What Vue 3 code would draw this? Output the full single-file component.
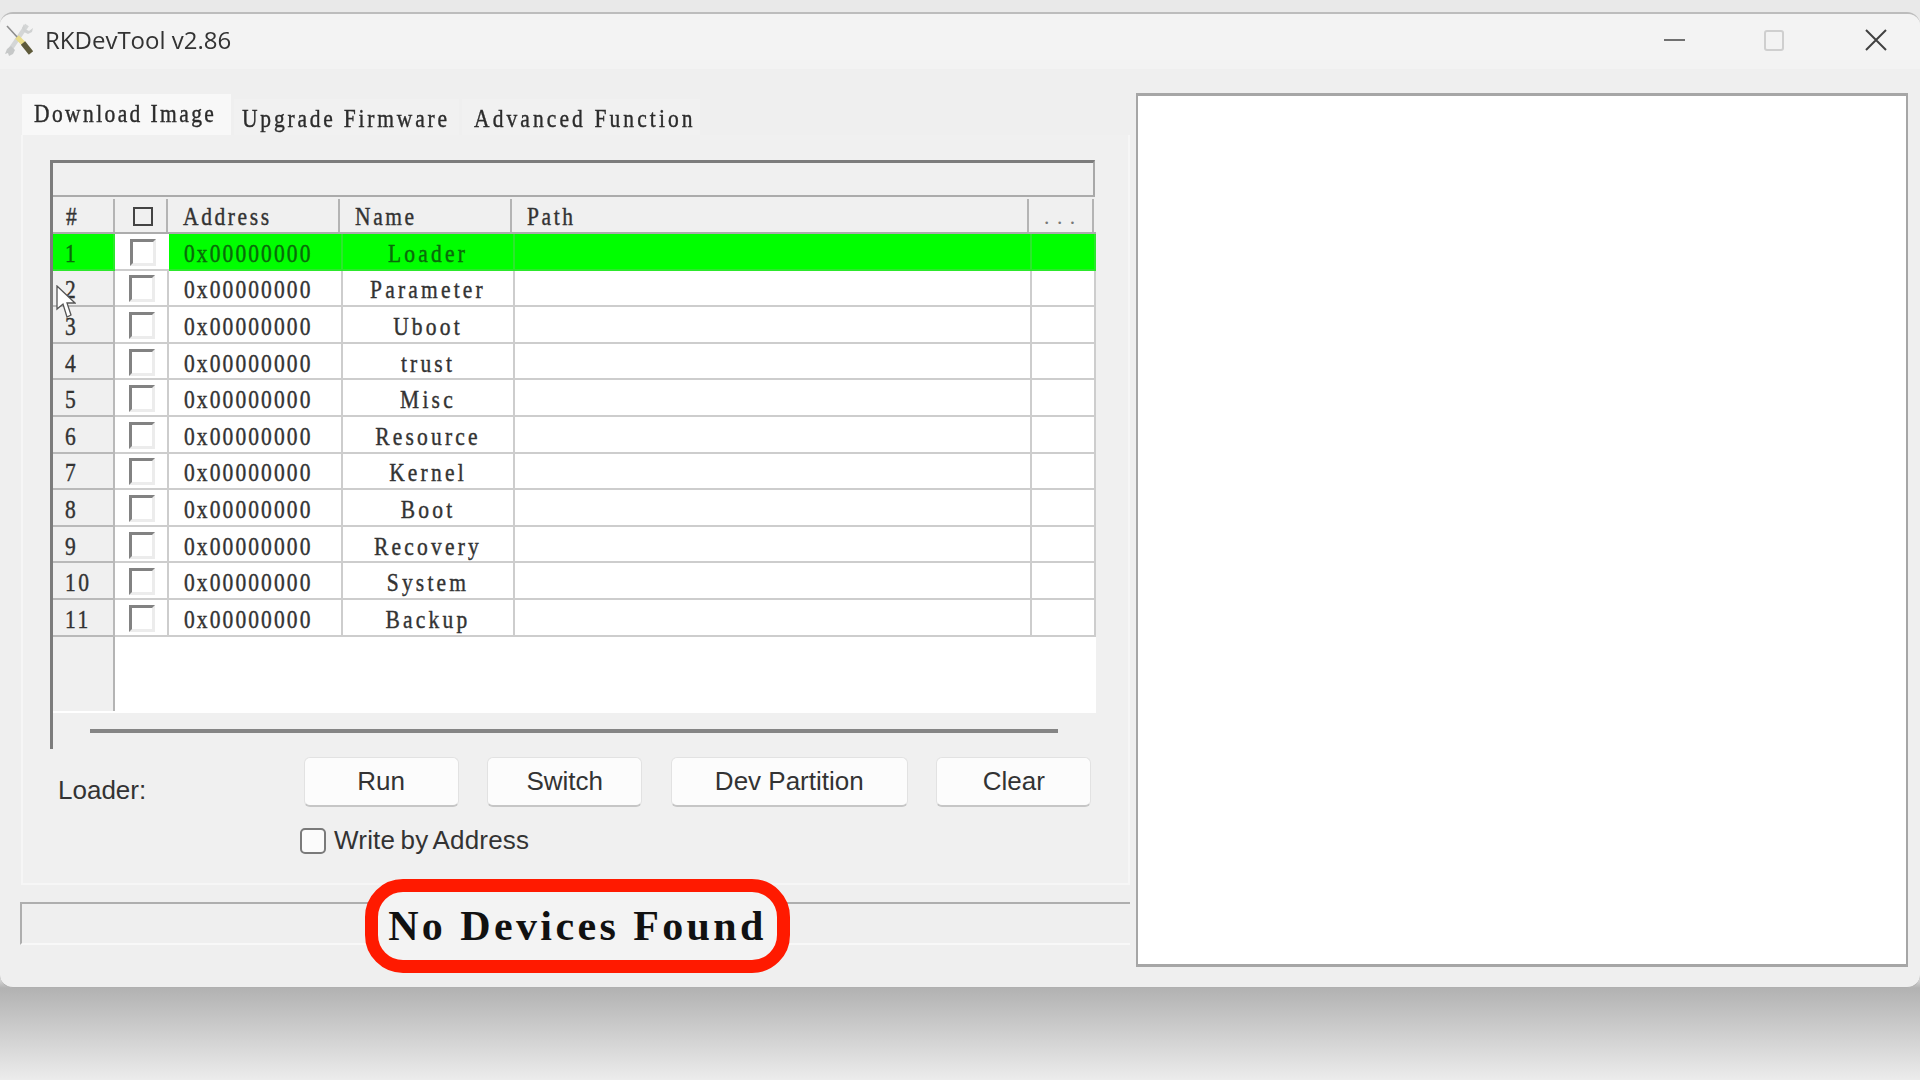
<script setup>
const names = ['Loader', 'Parameter', 'Uboot', 'trust', 'Misc', 'Resource', 'Kernel', 'Boot', 'Recovery', 'System', 'Backup']
const rows = names.map((name, i) => ({ no: i + 1, name, addr: '0x00000000' }))
const tabs = ['Download Image', 'Upgrade Firmware', 'Advanced Function']
const buttons = ['Run', 'Switch', 'Dev Partition', 'Clear']
</script>

<template>
  <div class="page">
    <div class="window">
      <div class="titlebar">
        <svg class="app-icon" viewBox="0 0 30 34" width="30" height="34">
          <path d="M23 3 L6 28" stroke="#d4d6d6" stroke-width="4.5" fill="none" />
          <path d="M20 2 L21 7 L25 9 L29 6 L28 10 L24 12 L20 10 L18 6 Z" fill="#d0d2d2" />
          <path d="M7 24 L3 27 L1 32 L4 31 L5 34 L9 32 L11 28 Z" fill="#c6c8c8" />
          <path d="M3 4 L14 16" stroke="#8d8d8d" stroke-width="1.6" fill="none" />
          <path d="M13 15 L20 22" stroke="#e9dc8a" stroke-width="5" fill="none" />
          <path d="M19 21 L27 31" stroke="#5e5a3a" stroke-width="5.5" fill="none" />
        </svg>
        <span class="title">RKDevTool v2.86</span>
        <div class="controls">
          <span class="min"></span>
          <span class="max"></span>
          <svg class="close" viewBox="0 0 22 22" width="22" height="22">
            <path d="M1 1 L21 21 M21 1 L1 21" stroke="#404040" stroke-width="2" fill="none" />
          </svg>
        </div>
      </div>

      <div class="content">
        <div class="left">
          <div class="tabs">
            <div v-for="(t, i) in tabs" :key="t" class="tab" :class="{ active: i === 0 }">
              <span class="st">{{ t }}</span>
            </div>
          </div>

          <div class="pane">
            <div class="group">
              <div class="strip"></div>
              <div class="thead">
                <div class="th th-no"><span class="st">#</span></div>
                <div class="th th-check"><span class="head-box"></span></div>
                <div class="th"><span class="st">Address</span></div>
                <div class="th"><span class="st">Name</span></div>
                <div class="th"><span class="st">Path</span></div>
                <div class="th th-dots"><span>...</span></div>
              </div>
              <div v-for="r in rows" :key="r.no" class="row" :class="{ hit: r.no === 1 }">
                <div class="cell no"><span class="st">{{ r.no }}</span></div>
                <div class="cell check"><span class="box"></span></div>
                <div class="cell addr"><span class="st">{{ r.addr }}</span></div>
                <div class="cell name"><span class="st">{{ r.name }}</span></div>
                <div class="cell"></div>
                <div class="cell"></div>
              </div>
              <div class="empty">
                <div class="empty-side"></div>
              </div>
              <div class="scroll"><div class="scroll-line"></div></div>

              <svg class="cursor" viewBox="0 0 20 34" width="20" height="34">
                <path d="M1 1 L1 24 L7 19 L11 32 L15 30 L11 18 L19 18 Z" fill="#fff" stroke="#555" stroke-width="1.3" />
              </svg>
            </div>

            <div class="actions">
              <span class="loader">Loader:</span>
              <button v-for="b in buttons" :key="b" class="btn">{{ b }}</button>
            </div>
            <div class="write">
              <span class="write-box"></span>
              <span class="write-text">Write by Address</span>
            </div>
          </div>

          <div class="status">
            <div class="callout">No Devices Found</div>
          </div>
        </div>

        <div class="log"></div>
      </div>
    </div>
  </div>
</template>

<style>
html, body {
  margin: 0;
  background: #e9e9e9;
}
</style>

<style scoped>
.page {
  box-sizing: border-box;
  width: 1920px;
  height: 1080px;
  padding-top: 12px;
  overflow: hidden;
  background: linear-gradient(to bottom, #e9e9e9 0, #e9e9e9 975px, #b2b2b2 988px, #ececec 1080px);
}
.window {
  box-sizing: border-box;
  height: 976px;
  background: #efefef;
  border-top: 2px solid #bcbcbc;
  border-bottom: 1px solid #b0b0b0;
  border-radius: 13px;
  overflow: hidden;
  filter: blur(0.5px);
}
.titlebar {
  display: flex;
  align-items: center;
  height: 55px;
  padding-left: 4px;
  background: #f3f3f3;
}
.app-icon {
  margin-top: -5px;
}
.title {
  margin: 0 0 5px 11px;
  font-family: "Open Sans", sans-serif;
  font-size: 24px;
  color: #333;
}
.controls {
  display: flex;
  align-items: center;
  margin: 0 0 3px auto;
  padding-right: 33px;
}
.min {
  width: 21px;
  height: 2px;
  background: #707070;
}
.max {
  box-sizing: border-box;
  width: 20px;
  height: 21px;
  margin-left: 79px;
  border: 2px solid #cfcfcf;
  border-radius: 3px;
}
.close {
  margin-left: 81px;
}

.content {
  display: flex;
}
.left {
  width: 1110px;
  padding-left: 20px;
}
.st {
  display: inline-block;
  transform: scaleY(1.2);
  white-space: pre;
  -webkit-text-stroke: 0.35px currentColor;
}

.tabs {
  display: flex;
  align-items: flex-end;
  gap: 3px;
  height: 41px;
  margin: 25px 0 0 2px;
}
.tab {
  display: flex;
  align-items: center;
  box-sizing: border-box;
  height: 36px;
  padding: 4px 12px 0;
  background: #f1f1f1;
  font-family: "Liberation Serif", serif;
  font-size: 21.5px;
  letter-spacing: 2.4px;
  color: #2c2c2c;
  white-space: nowrap;
}
.tab:nth-child(2) {
  width: 225px;
  padding-left: 8px;
  letter-spacing: 2.8px;
}
.tab:nth-child(3) {
  width: 238px;
  letter-spacing: 3.1px;
}
.tab.active {
  width: 209px;
  height: 41px;
  padding-top: 2px;
  padding-bottom: 2px;
  background: #f8f8f8;
}

.pane {
  box-sizing: border-box;
  height: 750px;
  padding: 25px 0 0 27px;
  margin-left: 1px;
  background: #f0f0f0;
  border: 1px solid #f6f6f6;
  border-width: 0 2px 2px 2px;
}
.group {
  position: relative;
  width: 1046px;
  height: 589px;
  border-left: 3px solid #7c7c7c;
  box-sizing: border-box;
  font-family: "Liberation Serif", serif;
  font-size: 21.5px;
  letter-spacing: 2.6px;
  color: #333;
}
.strip {
  box-sizing: border-box;
  height: 37px;
  margin-right: 1px;
  border-top: 3px solid #7c7c7c;
  border-right: 2px solid #a8a8a8;
  border-bottom: 2px solid #ababab;
}
.thead {
  display: grid;
  grid-template-columns: 62px 53px 172px 172px 517px 65px;
  height: 37px;
  box-sizing: border-box;
  border-bottom: 2px solid #acacac;
}
.th {
  box-sizing: border-box;
  padding: 6px 0 0 15px;
  margin-top: 2px;
  border-right: 2px solid #b4b4b4;
}
.th-no {
  padding-left: 13px;
}
.th-check {
  padding: 8px 0 0 18px;
}
.head-box {
  display: block;
  box-sizing: border-box;
  width: 20px;
  height: 19px;
  border: 2.5px solid #444;
}
.th-dots {
  padding: 6px 0 0 15px;
  color: #777;
  letter-spacing: 7.5px;
}
.row {
  display: grid;
  grid-template-columns: 62px 54px 174px 172px 517px 64px;
  height: 36.6px;
  background: #fff;
}
.cell {
  display: flex;
  align-items: center;
  box-sizing: border-box;
  padding-top: 6px;
  border-right: 2px solid #cdcdcd;
  border-bottom: 2px solid #cdcdcd;
  min-width: 0;
}
.no {
  padding-left: 12px;
  background: #f0f0f0;
  border-right-color: #b9b9b9;
  border-bottom-color: #b9b9b9;
}
.check {
  justify-content: center;
  padding: 2px 0 0 2px;
}
.box {
  box-sizing: border-box;
  width: 26px;
  height: 27px;
  border: 3px solid #ececec;
  border-top-color: #828282;
  border-left-color: #828282;
}
.addr {
  padding-left: 15px;
  letter-spacing: 2.1px;
}
.name {
  justify-content: center;
  letter-spacing: 3.2px;
}
.row.hit .cell {
  background: #00ff00;
  color: #0a6a0a;
  border-color: #2ce82c;
}
.row.hit .check {
  background: #fff;
  border-color: #cdcdcd;
  border-right: none;
}
.empty {
  height: 76px;
  background: #fff;
}
.empty-side {
  box-sizing: border-box;
  width: 62px;
  height: 74px;
  background: #f0f0f0;
  border-right: 2px solid #b4b4b4;
}
.scroll {
  box-sizing: border-box;
  height: 36px;
  padding: 16px 0 0 37px;
}
.scroll-line {
  width: 968px;
  height: 4px;
  background: #858585;
}
.cursor {
  position: absolute;
  left: 3px;
  top: 125px;
}

.actions {
  display: flex;
  align-items: flex-start;
  gap: 28.6px;
  margin-top: 8px;
}
.loader {
  width: 217px;
  margin-top: 18px;
  padding-left: 8px;
  font-family: "Liberation Sans", sans-serif;
  font-size: 26px;
  line-height: 30px;
  color: #333;
}
.btn {
  box-sizing: border-box;
  width: 155px;
  height: 50px;
  padding: 0;
  background: #fcfcfc;
  border: 1px solid #e2e2e2;
  border-bottom: 2px solid #c6c6c6;
  border-radius: 6px;
  font-family: "Liberation Sans", sans-serif;
  font-size: 26px;
  color: #333;
}
.btn:nth-of-type(3) {
  width: 237px;
}
.write {
  display: flex;
  align-items: center;
  gap: 8px;
  margin: 18px 0 0 250px;
}
.write-box {
  box-sizing: border-box;
  width: 26px;
  height: 26px;
  background: #fbfbfb;
  border: 2.5px solid #7a7a7a;
  border-radius: 5px;
}
.write-text {
  font-family: "Liberation Sans", sans-serif;
  font-size: 26px;
  letter-spacing: 0.2px;
  word-spacing: -2px;
  color: #333;
}

.status {
  position: relative;
  box-sizing: border-box;
  width: 1110px;
  height: 43px;
  margin-top: 17px;
  border-top: 2px solid #aeaeae;
  border-left: 2px solid #aeaeae;
  border-bottom: 2px solid #f8f8f8;
}
.callout {
  position: absolute;
  left: 343px;
  top: -25px;
  display: flex;
  align-items: center;
  justify-content: center;
  box-sizing: border-box;
  width: 425px;
  height: 94px;
  background: #f3f3f3;
  border: 13.5px solid #ff1a00;
  border-radius: 38px;
  font-family: "Liberation Serif", serif;
  font-size: 42px;
  font-weight: 700;
  letter-spacing: 3.4px;
  color: #111;
  white-space: nowrap;
}

.log {
  box-sizing: border-box;
  width: 772px;
  height: 874px;
  margin: 24px 0 0 6px;
  background: #fff;
  border: 2px solid #a6a6a6;
  border-top-width: 3px;
  border-bottom-width: 3px;
}
</style>
